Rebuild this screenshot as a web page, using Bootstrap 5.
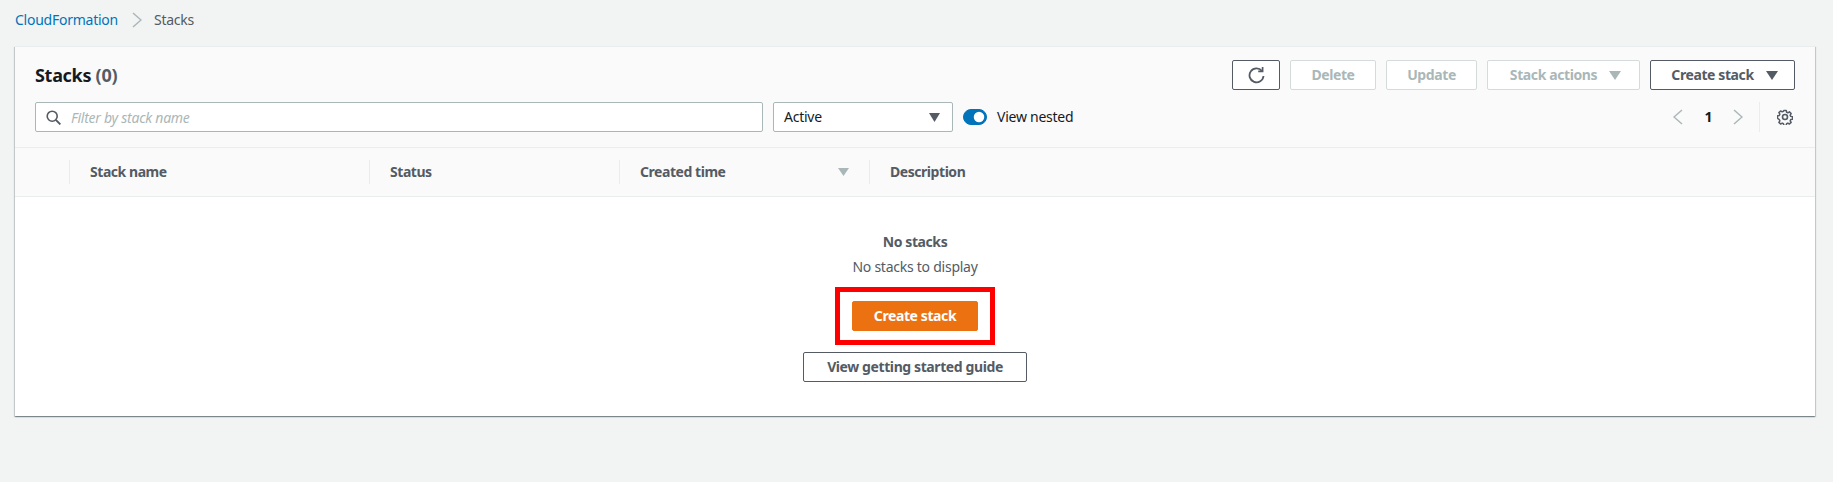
<!DOCTYPE html>
<html lang="en">
<head>
<meta charset="utf-8">
<title>Stacks</title>
<link href="https://cdn.jsdelivr.net/npm/bootstrap@5.3.0/dist/css/bootstrap.min.css" rel="stylesheet">
<style>
html,body{height:100%}
body{background:#f2f3f3;font-family:"Noto Sans","Liberation Sans",sans-serif;font-size:14px;line-height:22px;color:#16191f;letter-spacing:-.25px}
.crumbs{height:46px;padding:9px 0 0 15px;margin:0}
.crumbs a{color:#0073bb;text-decoration:none}
.crumbs .here{color:#545b64}
.crumb-sep{margin:3px 12px 0 14px;flex:none}
.stack-panel{margin:0 18px 0 15px;background:#fff;border-top:1px solid #eaeded;box-shadow:0 1px 1px 0 rgba(0,28,36,.3),1px 1px 1px 0 rgba(0,28,36,.15),-1px 1px 1px 0 rgba(0,28,36,.15);height:370px}
.panel-head{background:#fafafa;padding:13px 20px 14px 20px;border-bottom:1px solid #eaeded;height:101px}
.panel-title{font-size:18px;font-weight:700;line-height:30px;margin:0;color:#16191f;letter-spacing:-.3px}
.panel-title span{font-weight:700;color:#545b64}
.aws-btn{height:30px;padding:0 20px;border:1px solid #545b64;border-radius:2px;background:#fff;color:#545b64;font-size:14px;font-weight:700;line-height:28px;white-space:nowrap;letter-spacing:-.4px;display:inline-flex;align-items:center;justify-content:center}
.aws-btn:disabled,.aws-btn.disabled{background:#fff;border-color:#d5dbdb;color:#aab7b8;opacity:1}
.btn-refresh{width:48px;padding:0}
.btn-del{width:86px;padding:0}.btn-upd{width:91px;padding:0}.btn-act{width:153px;padding:0 0 0 4px}.btn-mk{width:145px;padding:0 0 0 4px}
.caret-gap{margin-left:12px}
.tool-gap{gap:10px}
.tools-row{margin-top:12px;height:30px}
.search-box{width:728px;height:30px;border:1px solid #aab7b8;border-radius:2px;background:#fff;padding-left:10px}
.search-box input{border:0;outline:0;padding:0 0 0 10px;height:28px;width:100%;font-size:14px;font-style:italic;background:transparent;box-shadow:none;letter-spacing:-.25px}
.search-box input::placeholder{color:#aab7b8;font-style:italic;opacity:1}
.state-pick{width:180px;height:30px;margin-left:10px;border:1px solid #aab7b8;border-radius:2px;background:#fff;padding:0 12px 0 10px;color:#16191f}
.nest{margin:0 0 0 10px;padding:0;min-height:0}
.nest .form-check-input{width:24px;height:16px;margin:0 10px 0 0;float:none;background-color:#0073bb;border-color:#0073bb}
.nest label{color:#16191f}
.pager{margin-left:auto;margin-right:2px;color:#16191f}
.page-num{font-weight:700;width:9px;text-align:center;margin:0 20px 0 21px}
.page-rule{width:1px;height:30px;background:#eaeded;margin:0 17px 0 16px}
.stack-table{--bs-table-bg:transparent;margin:0;table-layout:fixed;width:100%}
.stack-table th{background:#fafafa;border-bottom:1px solid #eaeded;padding:12px 0;font-weight:700;color:#545b64;letter-spacing:-.45px}
.th-in{height:24px;line-height:24px;border-left:1px solid #eaeded;padding:0 20px;display:flex;justify-content:space-between;align-items:center}
.th-in.blank{border-left:0}
.stack-table td{border:0;padding:34px 0;text-align:center;color:#545b64;background:#fff}
.empty-title{font-weight:700;line-height:22px;letter-spacing:-.4px}
.empty-text{line-height:22px;margin-top:3px}
.red-mark{display:inline-block;border:5px solid #f00;padding:9px 12px;margin-top:9px;line-height:0;vertical-align:top}
.btn-orange{width:126px;padding:0;background:#ec7211;border-color:#ec7211;color:#fff}
.btn-orange:hover{background:#ec7211;border-color:#ec7211;color:#fff}
.btn-guide{width:224px;padding:0;margin-top:7px}
.guide-row{line-height:0}
</style>
</head>
<body>
<nav class="crumbs d-flex align-items-start" aria-label="breadcrumb">
  <a href="#">CloudFormation</a>
  <svg class="crumb-sep" width="10" height="16" viewBox="0 0 10 16" fill="none" stroke="#aab7b8" stroke-width="1.5"><path d="M1 1l8 7-8 7"/></svg>
  <span class="here">Stacks</span>
</nav>
<main class="stack-panel">
  <div class="panel-head">
    <div class="d-flex justify-content-between align-items-center">
      <h1 class="panel-title">Stacks <span>(0)</span></h1>
      <div class="d-flex tool-gap">
        <button class="btn aws-btn btn-refresh" aria-label="Refresh">
          <svg width="17" height="18" viewBox="0 0 17 18" fill="none" stroke="#545b64" stroke-width="1.8"><path d="M14 5A7 7 0 1 0 15.5 10"/><path d="M14.6 1v4.4h-4.4" stroke-width="1.7"/></svg>
        </button>
        <button class="btn aws-btn btn-del" disabled>Delete</button>
        <button class="btn aws-btn btn-upd" disabled>Update</button>
        <button class="btn aws-btn btn-act" disabled>Stack actions
          <svg class="caret-gap" width="12" height="9" viewBox="0 0 12 9" fill="#aab7b8"><path d="M0 0h12L6 9z"/></svg>
        </button>
        <button class="btn aws-btn btn-mk">Create stack
          <svg class="caret-gap" width="12" height="9" viewBox="0 0 12 9" fill="#545b64"><path d="M0 0h12L6 9z"/></svg>
        </button>
      </div>
    </div>
    <div class="d-flex align-items-center tools-row">
      <div class="search-box d-flex align-items-center">
        <svg class="flex-shrink-0" width="15" height="15" viewBox="0 0 15 15" fill="none" stroke="#545b64" stroke-width="1.6"><circle cx="6.2" cy="6.2" r="5"/><path d="M9.8 9.8l4.6 4.6" stroke-width="1.9"/></svg>
        <input type="text" class="form-control" placeholder="Filter by stack name">
      </div>
      <div class="state-pick d-flex align-items-center justify-content-between">
        <span>Active</span>
        <svg width="11" height="9" viewBox="0 0 11 9" fill="#545b64"><path d="M0 0h11L5.5 9z"/></svg>
      </div>
      <div class="form-check form-switch nest d-flex align-items-center">
        <input class="form-check-input" type="checkbox" role="switch" id="nested" checked>
        <label for="nested">View nested</label>
      </div>
      <div class="pager d-flex align-items-center">
        <svg width="10" height="16" viewBox="0 0 10 16" fill="none" stroke="#aab7b8" stroke-width="1.5"><path d="M9 1L1 8l8 7"/></svg>
        <span class="page-num">1</span>
        <svg width="10" height="16" viewBox="0 0 10 16" fill="none" stroke="#aab7b8" stroke-width="1.5"><path d="M1 1l8 7-8 7"/></svg>
        <span class="page-rule"></span>
        <svg width="16" height="16" viewBox="0 0 16 16" fill="none" stroke="#545b64" stroke-width="1.6"><path d="M6.7 1h2.6l.4 1.9 1.3.6 1.7-1 1.8 1.8-1 1.7.6 1.3 1.9.4v2.6l-1.9.4-.6 1.3 1 1.7-1.8 1.8-1.7-1-1.3.6-.4 1.9H6.7l-.4-1.9-1.3-.6-1.7 1-1.8-1.8 1-1.7-.6-1.3L0 9.3V6.7l1.9-.4.6-1.3-1-1.7 1.8-1.8 1.7 1 1.3-.6z" transform="translate(.5 .5) scale(.94)" stroke-linejoin="round"/><circle cx="8" cy="8" r="2.5"/></svg>
      </div>
    </div>
  </div>
  <table class="table stack-table">
    <colgroup><col style="width:54px"><col style="width:300px"><col style="width:250px"><col style="width:250px"><col></colgroup>
    <thead>
      <tr>
        <th><div class="th-in blank"></div></th>
        <th><div class="th-in">Stack name</div></th>
        <th><div class="th-in">Status</div></th>
        <th><div class="th-in">Created time
          <svg width="11" height="8" viewBox="0 0 11 8" fill="#aab7b8"><path d="M0 0h11L5.5 8z"/></svg></div></th>
        <th><div class="th-in">Description</div></th>
      </tr>
    </thead>
    <tbody>
      <tr>
        <td colspan="5">
          <div class="empty-title">No stacks</div>
          <div class="empty-text">No stacks to display</div>
          <div class="red-mark"><button class="btn aws-btn btn-orange">Create stack</button></div>
          <div class="guide-row"><button class="btn aws-btn btn-guide">View getting started guide</button></div>
        </td>
      </tr>
    </tbody>
  </table>
</main>
<script src="https://cdn.jsdelivr.net/npm/bootstrap@5.3.0/dist/js/bootstrap.bundle.min.js"></script>
</body>
</html>
